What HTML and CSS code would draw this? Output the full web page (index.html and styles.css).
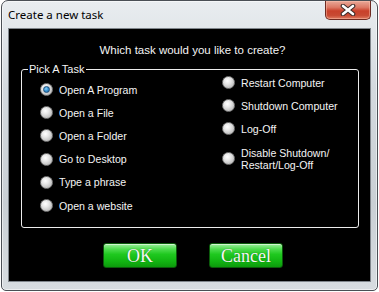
FILE: index.html
```html
<!DOCTYPE html>
<html>
<head>
<meta charset="utf-8">
<link rel="stylesheet" href="styles.css">
</head>
<body>
<div class="window">
  <div class="titlebar">
    <span class="title">Create a new task</span>
    <button class="close" aria-label="Close">
      <svg width="16" height="12" viewBox="0 0 16 12">
        <path d="M3 2 L13 10 M13 2 L3 10" stroke="#3a2a28" stroke-width="4.6" stroke-linecap="round"/>
        <path d="M3 2 L13 10 M13 2 L3 10" stroke="#ffffff" stroke-width="2.6" stroke-linecap="round"/>
      </svg>
    </button>
  </div>
  <div class="client">
    <div class="question">Which task would you like to create?</div>
    <div class="group">
      <span class="legend">Pick A Task</span>
      <div class="col col-left">
        <label class="opt"><span class="radio on"></span>Open A Program</label>
        <label class="opt"><span class="radio"></span>Open a File</label>
        <label class="opt"><span class="radio"></span>Open a Folder</label>
        <label class="opt"><span class="radio"></span>Go to Desktop</label>
        <label class="opt"><span class="radio"></span>Type a phrase</label>
        <label class="opt"><span class="radio"></span>Open a website</label>
      </div>
      <div class="col col-right">
        <label class="opt"><span class="radio"></span>Restart Computer</label>
        <label class="opt"><span class="radio"></span>Shutdown Computer</label>
        <label class="opt"><span class="radio"></span>Log-Off</label>
        <label class="opt tall"><span class="radio"></span><span class="two">Disable Shutdown/<br>Restart/Log-Off</span></label>
      </div>
    </div>
    <div class="buttons">
      <button class="btn">OK</button>
      <button class="btn">Cancel</button>
    </div>
  </div>
</div>
</body>
</html>
```
FILE: styles.css
```css
html, body {
  margin: 0;
  padding: 0;
  background: #ffffff;
}

.window {
  box-sizing: border-box;
  margin-left: 1px;
  width: 377px;
  height: 291px;
  border: 1px solid #4a4f55;
  border-radius: 7px 7px 5px 5px;
  padding: 0 6px 8px 6px;
  background: linear-gradient(180deg, #e9edf0 0%, #d3d9de 30%, #c9cfd4 70%, #d7dce0 100%);
  box-shadow: inset 0 0 0 1px rgba(255,255,255,0.55);
  display: flex;
  flex-direction: column;
}

.titlebar {
  height: 27px;
  display: flex;
  justify-content: space-between;
  align-items: flex-start;
}

.title {
  font-family: "Noto Sans", "Open Sans", sans-serif;
  font-size: 11.5px;
  color: #000;
  margin-top: 6px;
  line-height: 16px;
}

.close {
  width: 46px;
  height: 19px;
  margin: 0;
  padding: 0;
  border: 1px solid #6e2b22;
  border-top: none;
  border-radius: 0 0 5px 5px;
  background: linear-gradient(180deg, #e9a898 0%, #dd7a66 35%, #c9412b 55%, #c84a33 80%, #e07c62 100%);
  box-shadow: inset 0 0 0 1px rgba(255,200,180,0.45);
  display: flex;
  align-items: center;
  justify-content: center;
}

.close svg {
  display: block;
}

.client {
  box-sizing: border-box;
  width: 363px;
  height: 254px;
  background: #000;
  border: 1px solid #80868c;
  display: flex;
  flex-direction: column;
}

.question {
  font-family: "Liberation Sans", Arial, sans-serif;
  font-size: 11.5px;
  line-height: 14px;
  color: #f4f4f4;
  text-align: center;
  padding-top: 14px;
  padding-left: 6px;
}

.group {
  position: relative;
  box-sizing: border-box;
  margin: 12px 0 0 12px;
  width: 338px;
  height: 159px;
  border: 1px solid #ececec;
  border-radius: 3px;
  display: grid;
  grid-template-columns: 182px 1fr;
  padding-left: 18px;
}

.legend {
  position: absolute;
  top: -8px;
  left: 6px;
  padding: 0 2px 0 1px;
  background: #000;
  color: #f4f4f4;
  font-family: "Liberation Sans", Arial, sans-serif;
  font-size: 11px;
  line-height: 14px;
}

.col {
  display: flex;
  flex-direction: column;
}

.col-left {
  padding-top: 8px;
}

.col-right {
  padding-top: 1px;
}

.opt {
  height: 23.2px;
  display: flex;
  align-items: center;
  gap: 6px;
  font-family: "Liberation Sans", Arial, sans-serif;
  font-size: 10.6px;
  color: #f4f4f4;
  white-space: nowrap;
}

.opt.tall {
  height: 36px;
  padding-top: 0px;
}

.two {
  line-height: 12px;
}

.radio {
  position: relative;
  flex: none;
  box-sizing: border-box;
  width: 13px;
  height: 13px;
  border-radius: 50%;
  border: 1px solid #7c7c7c;
  background: radial-gradient(circle at 40% 35%, #ffffff 0%, #e6e6e6 35%, #c4c4c4 70%, #a8a8a8 100%);
}

.radio.on::after {
  content: "";
  position: absolute;
  left: 2px;
  top: 2px;
  width: 7px;
  height: 7px;
  box-sizing: border-box;
  border-radius: 50%;
  border: 1px solid #1e4f7a;
  background: radial-gradient(circle at 40% 35%, #8fd0f5 0%, #3a97d6 45%, #1b5e9a 100%);
}

.buttons {
  display: flex;
  justify-content: center;
  gap: 32px;
  margin-top: 15px;
  padding-left: 7px;
}

.btn {
  box-sizing: border-box;
  width: 74px;
  height: 25px;
  margin: 0;
  padding: 0;
  border: 1px solid #0b5a0b;
  border-radius: 3px;
  background: linear-gradient(180deg, #9df09d 0%, #4fdc4f 22%, #1fc81f 45%, #12b412 75%, #0c9a0c 100%);
  box-shadow: inset 0 1px 0 rgba(255,255,255,0.55);
  font-family: "Liberation Serif", "Times New Roman", serif;
  font-size: 18px;
  line-height: 22px;
  color: #f6f6f6;
  text-shadow: 0 0 1px rgba(0,60,0,0.6);
}
```
